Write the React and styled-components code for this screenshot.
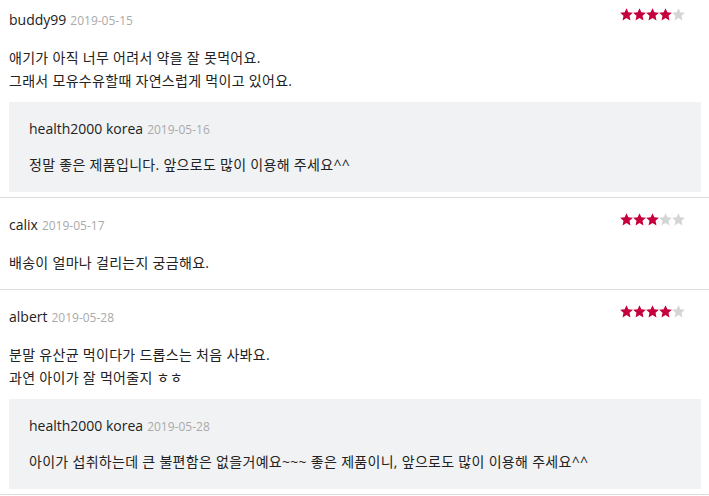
import React from 'react';
import styled, { createGlobalStyle } from 'styled-components';

const GlobalStyle = createGlobalStyle`
  html, body {
    margin: 0;
    padding: 0;
    background: #ffffff;
  }
  body {
    font-family: "Open Sans", "Noto Sans CJK KR", sans-serif;
    color: #333;
    overflow: hidden;
  }
`;

const ReviewList = styled.div`
  width: 709px;
`;

const Review = styled.div`
  padding: 16px 8px ${props => (props.hasReply ? '5px' : '15px')} 9px;
  border-bottom: 1px solid #dcdcdc;

  &:first-child {
    padding-top: 9px;
  }
`;

const Header = styled.div`
  display: flex;
  justify-content: space-between;
  align-items: flex-start;
  height: 22px;
`;

const Author = styled.div`
  font-size: 14px;
  line-height: 22px;
  color: #222;
  white-space: nowrap;
`;

const DateText = styled.span`
  font-size: 12px;
  color: #aaa;
  margin-left: 4px;
`;

const Stars = styled.div`
  display: flex;
  margin-top: -1px;
  margin-right: 16px;
`;

const Body = styled.div`
  margin-top: 15px;
  margin-bottom: ${props => (props.hasReply ? '10px' : '0')};
  font-size: 14px;
  line-height: 23px;
  letter-spacing: 0.3px;
  color: #222;
  white-space: pre-line;
`;

const ReplyBox = styled.div`
  background: #f1f2f4;
  padding: 16px 20px 17px;
  height: 90px;
  box-sizing: border-box;
`;

const ReplyBody = styled(Body)`
  margin-top: 12px;
  margin-bottom: 0;
`;

const Star = ({ on }) => (
  <svg width="13" height="13" viewBox="1 1.5 22 21">
    <polygon
      points="12,1.5 15.1,8.4 22.8,9.2 17.1,14.3 18.7,22 12,18.1 5.3,22 6.9,14.3 1.2,9.2 8.9,8.4"
      fill={on ? '#c5003c' : '#d5d5d5'}
    />
  </svg>
);

const Rating = ({ value }) => (
  <Stars>
    {[1, 2, 3, 4, 5].map(n => (
      <Star key={n} on={n <= value} />
    ))}
  </Stars>
);

const reviews = [
  {
    id: 1,
    author: 'buddy99',
    date: '2019-05-15',
    rating: 4,
    text: '애기가 아직 너무 어려서 약을 잘 못먹어요.\n그래서 모유수유할때 자연스럽게 먹이고 있어요.',
    reply: {
      author: 'health2000 korea',
      date: '2019-05-16',
      text: '정말 좋은 제품입니다. 앞으로도 많이 이용해 주세요^^',
    },
  },
  {
    id: 2,
    author: 'calix',
    date: '2019-05-17',
    rating: 3,
    text: '배송이 얼마나 걸리는지 궁금해요.',
  },
  {
    id: 3,
    author: 'albert',
    date: '2019-05-28',
    rating: 4,
    text: '분말 유산균 먹이다가 드롭스는 처음 사봐요.\n과연 아이가 잘 먹어줄지 ㅎㅎ',
    reply: {
      author: 'health2000 korea',
      date: '2019-05-28',
      text: '아이가 섭취하는데 큰 불편함은 없을거예요~~~ 좋은 제품이니, 앞으로도 많이 이용해 주세요^^',
    },
  },
];

const App = () => (
  <>
    <GlobalStyle />
    <ReviewList>
      {reviews.map(r => (
        <Review key={r.id} hasReply={!!r.reply}>
          <Header>
            <Author>
              {r.author}
              <DateText>{r.date}</DateText>
            </Author>
            <Rating value={r.rating} />
          </Header>
          <Body hasReply={!!r.reply}>{r.text}</Body>
          {r.reply && (
            <ReplyBox>
              <Author>
                {r.reply.author}
                <DateText>{r.reply.date}</DateText>
              </Author>
              <ReplyBody>{r.reply.text}</ReplyBody>
            </ReplyBox>
          )}
        </Review>
      ))}
    </ReviewList>
  </>
);

export default App;
